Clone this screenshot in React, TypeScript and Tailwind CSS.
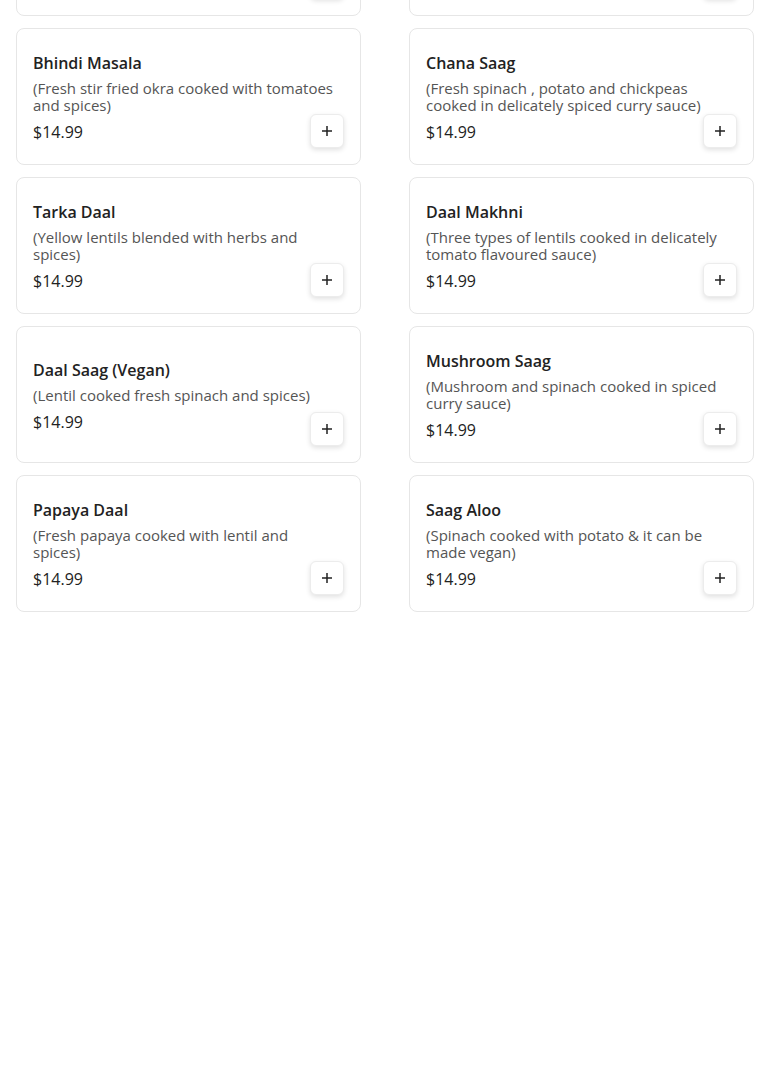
import React from "react";

type Dish = { name: string; desc: string; price: string };

const dishes: Dish[] = [
  { name: "Bhindi Masala", desc: "(Fresh stir fried okra cooked with tomatoes and spices)", price: "$14.99" },
  { name: "Chana Saag", desc: "(Fresh spinach , potato and chickpeas cooked in delicately spiced curry sauce)", price: "$14.99" },
  { name: "Tarka Daal", desc: "(Yellow lentils blended with herbs and spices)", price: "$14.99" },
  { name: "Daal Makhni", desc: "(Three types of lentils cooked in delicately tomato flavoured sauce)", price: "$14.99" },
  { name: "Daal Saag (Vegan)", desc: "(Lentil cooked fresh spinach and spices)", price: "$14.99" },
  { name: "Mushroom Saag", desc: "(Mushroom and spinach cooked in spiced curry sauce)", price: "$14.99" },
  { name: "Papaya Daal", desc: "(Fresh papaya cooked with lentil and spices)", price: "$14.99" },
  { name: "Saag Aloo", desc: "(Spinach cooked with potato & it can be made vegan)", price: "$14.99" },
];

function AddButton() {
  return (
    <button className="col-start-1 row-start-1 flex h-[34px] w-[34px] items-center justify-center self-end justify-self-end rounded-md border border-[#ececec] bg-white shadow-[0_2px_5px_rgba(0,0,0,0.12)]">
      <svg width="10" height="10" viewBox="0 0 10 10" fill="none">
        <path d="M5 0v10M0 5h10" stroke="#222" strokeWidth="1.5" />
      </svg>
    </button>
  );
}

function DishCard({ dish }: { dish?: Dish }) {
  return (
    <div className="grid h-[137px] grid-cols-1 grid-rows-1 rounded-lg border border-[#e6e6e6] bg-white p-4">
      <div className="col-start-1 row-start-1 self-center pr-[6px] pt-[2px]">
        {dish && (
          <>
            <div className="text-[16px] font-semibold leading-[22px] text-[#222]">{dish.name}</div>
            <p className="mt-[6px] text-[15px] leading-[17px] text-[#555]">{dish.desc}</p>
            <div className="mt-[7px] text-[16px] leading-[22px] text-[#222]">{dish.price}</div>
          </>
        )}
      </div>
      <AddButton />
    </div>
  );
}

export default function App() {
  return (
    <div className="min-h-screen bg-white font-['Open_Sans',sans-serif]">
      <div className="grid grid-cols-2 gap-x-12 gap-y-3 px-4">
        {/* previous row, scrolled mostly out of view */}
        <div className="-mt-[121px]">
          <DishCard />
        </div>
        <div className="-mt-[121px]">
          <DishCard />
        </div>
        {dishes.map((d) => (
          <DishCard key={d.name} dish={d} />
        ))}
      </div>
    </div>
  );
}
